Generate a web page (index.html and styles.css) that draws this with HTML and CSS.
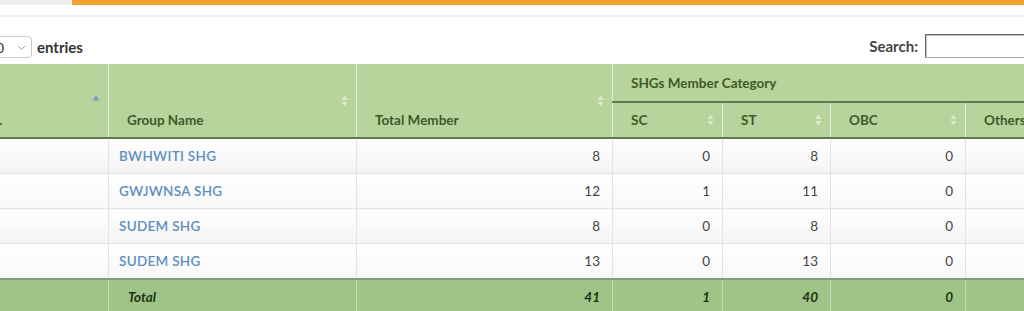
FILE: index.html
```html
<!DOCTYPE html>
<html>
<head>
<meta charset="utf-8">
<link rel="stylesheet" href="styles.css">
</head>
<body>
<div class="topbar"><div class="tab-gray"></div><div class="tab-orange"></div></div>
<div class="rule"></div>
<div class="page">
  <div class="controls">
    <label class="length">
      <span class="select"><span class="select-val">10</span><svg class="chev" width="9" height="6" viewBox="0 0 9 6"><path d="M1 1l3.5 3.5L8 1" fill="none" stroke="#999" stroke-width="1"/></svg></span>
      <span class="lbl">entries</span>
    </label>
    <label class="search"><span class="lbl">Search:</span><span class="search-input"></span></label>
  </div>
  <table class="grid">
    <colgroup>
      <col class="c1"><col class="c2"><col class="c3"><col class="c4"><col class="c5"><col class="c6"><col class="c7">
    </colgroup>
    <thead>
      <tr class="h1">
        <th rowspan="2">Sl No.<span class="sort up"><svg width="8" height="7" viewBox="0 0 8 7"><path d="M4 0.5L7.5 6H0.5z" fill="#7e9fc9"/></svg></span></th>
        <th rowspan="2">Group Name<span class="sort"><svg width="7" height="12" viewBox="0 0 7 12"><path d="M3.5 0.5L6.5 5H0.5zM3.5 11.5L6.5 7H0.5z" fill="#dde9d0"/></svg></span></th>
        <th rowspan="2">Total Member<span class="sort"><svg width="7" height="12" viewBox="0 0 7 12"><path d="M3.5 0.5L6.5 5H0.5zM3.5 11.5L6.5 7H0.5z" fill="#dde9d0"/></svg></span></th>
        <th colspan="4" class="group">SHGs Member Category</th>
      </tr>
      <tr class="h2">
        <th>SC<span class="sort"><svg width="7" height="12" viewBox="0 0 7 12"><path d="M3.5 0.5L6.5 5H0.5zM3.5 11.5L6.5 7H0.5z" fill="#dde9d0"/></svg></span></th>
        <th>ST<span class="sort"><svg width="7" height="12" viewBox="0 0 7 12"><path d="M3.5 0.5L6.5 5H0.5zM3.5 11.5L6.5 7H0.5z" fill="#dde9d0"/></svg></span></th>
        <th>OBC<span class="sort"><svg width="7" height="12" viewBox="0 0 7 12"><path d="M3.5 0.5L6.5 5H0.5zM3.5 11.5L6.5 7H0.5z" fill="#dde9d0"/></svg></span></th>
        <th>Others<span class="sort"><svg width="7" height="12" viewBox="0 0 7 12"><path d="M3.5 0.5L6.5 5H0.5zM3.5 11.5L6.5 7H0.5z" fill="#dde9d0"/></svg></span></th>
      </tr>
    </thead>
    <tbody>
      <tr class="odd"><td class="sl">1</td><td><a href="#">BWHWITI SHG</a></td><td class="num">8</td><td class="num">0</td><td class="num">8</td><td class="num">0</td><td class="num">0</td></tr>
      <tr class="even"><td class="sl">2</td><td><a href="#">GWJWNSA SHG</a></td><td class="num">12</td><td class="num">1</td><td class="num">11</td><td class="num">0</td><td class="num">0</td></tr>
      <tr class="odd"><td class="sl">3</td><td><a href="#">SUDEM SHG</a></td><td class="num">8</td><td class="num">0</td><td class="num">8</td><td class="num">0</td><td class="num">0</td></tr>
      <tr class="even"><td class="sl">4</td><td><a href="#">SUDEM SHG</a></td><td class="num">13</td><td class="num">0</td><td class="num">13</td><td class="num">0</td><td class="num">0</td></tr>
    </tbody>
    <tfoot>
      <tr><td></td><td class="total">Total</td><td class="num">41</td><td class="num">1</td><td class="num">40</td><td class="num">0</td><td class="num">0</td></tr>
    </tfoot>
  </table>
</div>
</body>
</html>
```

FILE: styles.css
```css
html, body {
  margin: 0;
  padding: 0;
  background: #ffffff;
  overflow: hidden;
  font-family: Lato, "Open Sans", sans-serif;
  color: #444;
}
.topbar {
  display: flex;
  height: 5px;
}
.tab-gray {
  width: 72px;
  background: #ececec;
}
.tab-orange {
  flex: 1;
  background: #f0a12e;
}
.rule {
  margin-top: 10px;
  height: 2px;
  background: #ededed;
}
.page {
  margin-left: -52px;
  width: 1146px;
}
.controls {
  display: flex;
  justify-content: space-between;
  align-items: flex-end;
  height: 45px;
  padding-bottom: 4px;
  box-sizing: border-box;
}
.length {
  display: flex;
  align-items: center;
  gap: 5px;
}
.select {
  display: flex;
  align-items: center;
  justify-content: space-between;
  width: 84px;
  height: 22px;
  box-sizing: border-box;
  border: 1px solid #c9c9c9;
  border-radius: 4px;
  padding: 0 5px 0 39px;
  font-size: 14px;
  color: #333;
}
.chev { margin-top: 1px; }
.lbl {
  font-weight: 700;
  font-size: 15px;
  color: #333;
}
.search {
  display: flex;
  align-items: center;
  gap: 7px;
  margin-right: 57px;
}
.search .lbl { color: #444; }
.search-input {
  width: 112px;
  height: 24px;
  box-sizing: border-box;
  border: 1px solid #666;
  border-right-color: #aaa;
  border-bottom-color: #aaa;
  box-shadow: inset 1px 1px 1px rgba(0,0,0,0.25);
}
.grid {
  border-collapse: collapse;
  table-layout: fixed;
  width: 1152px;
  margin-top: 2px;
}
.c1 { width: 160px; }
.c2 { width: 248px; }
.c3 { width: 256px; }
.c4 { width: 110px; }
.c5 { width: 108px; }
.c6 { width: 135px; }
.c7 { width: 135px; }
th {
  position: relative;
  background: #b6d49c;
  color: #3e5a2c;
  font-weight: 700;
  font-size: 13.5px;
  text-align: left;
  padding: 0 18px;
  border-left: 1px solid #e3eedb;
  border-right: 1px solid #e3eedb;
}
.h1 th {
  height: 37px;
  vertical-align: bottom;
  padding-bottom: 9px;
}
.h1 th.group {
  vertical-align: middle;
  padding-bottom: 0;
  border-bottom: 2px solid #5f7a4e;
}
.h2 th {
  height: 34px;
  vertical-align: middle;
}
thead tr.h2 th, .h1 th[rowspan] {
  border-bottom: 2px solid #5f7a4e;
}
.sort {
  position: absolute;
  right: 8px;
  top: 50%;
  transform: translateY(-50%);
  display: flex;
}
.sort.up { right: 8px; margin-top: -3px; }
td {
  height: 34px;
  font-size: 13.5px;
  color: #444;
  padding: 0 12px;
  border-left: 1px solid #e2e2e2;
  border-right: 1px solid #e2e2e2;
  border-bottom: 1px solid #e4e4e4;
  vertical-align: middle;
}
tr.odd td { background: linear-gradient(#ffffff, #f3f3f3); }
tr.even td { background: linear-gradient(#ffffff, #f8f8f8); }
td.sl { color: transparent; }
td a {
  color: #5d8ec2;
  text-decoration: none;
  font-weight: 600;
  letter-spacing: 0.3px;
}
td:nth-child(2) { padding-left: 10px; }
.num { text-align: right; }
tfoot td {
  background: #9fc488;
  color: #1e3314;
  font-weight: 700;
  font-style: italic;
  border-top: 2px solid #8a9a80;
  border-left: 1px solid #c6dcb6;
  border-right: 1px solid #c6dcb6;
  height: 33px;
}
tfoot td.total { padding-left: 19px; }
```
